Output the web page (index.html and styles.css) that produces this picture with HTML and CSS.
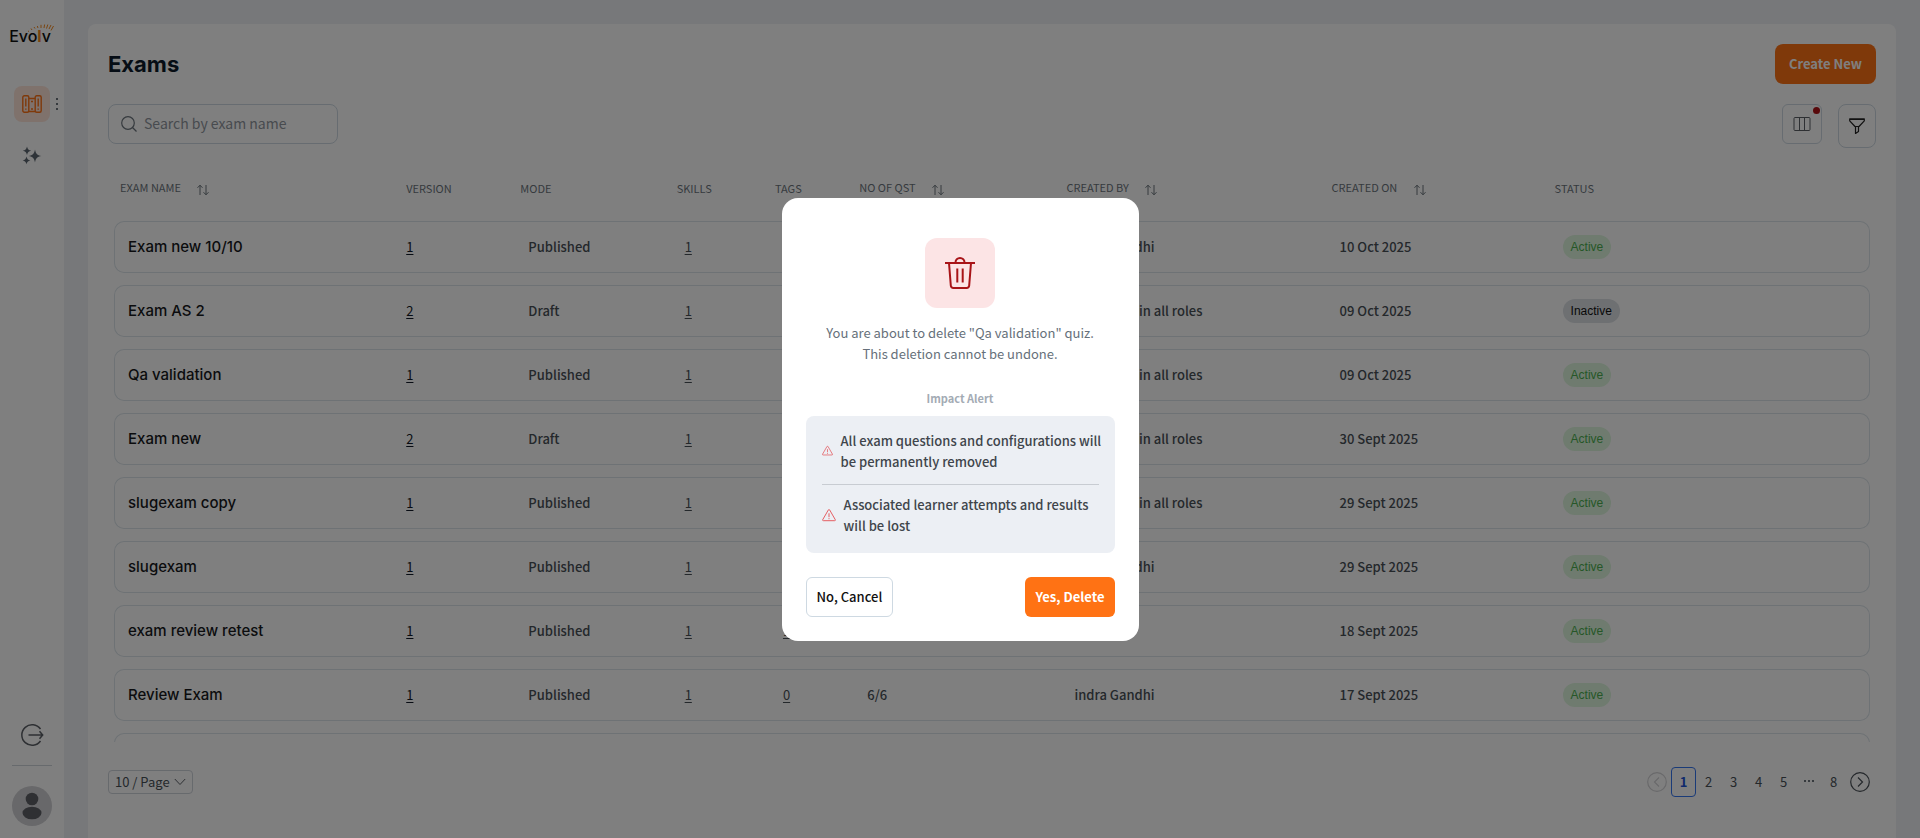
FILE: index.html
```html
<!DOCTYPE html>
<html lang="en">
<head>
  <meta charset="UTF-8" />
  <meta name="viewport" content="width=device-width, initial-scale=1.0"/>
  <title>Exams</title>
  <link rel="stylesheet" href="styles.css">
</head>
<body>
  <svg class="sprite" aria-hidden="true">
    <symbol id="sort" viewBox="0 0 12 12">
      <path d="M3 11V1.2M.5 3.8 3 1.2l2.500 2.600M9 1v9.800M6.500 8.200 9 10.800l2.500-2.600" fill="none" stroke="currentColor" stroke-linejoin="round"/>
    </symbol>
    <symbol id="warning" viewBox="0 0 16 16">
      <path d="M7.200 2.300.9 13.200a.9.9 0 0 0 .8 1.300h12.600a.9.9 0 0 0 .8-1.300L8.800 2.300a.9.9 0 0 0-1.600 0ZM8 6v4.500M8 11.600v1.200" fill="none" stroke="currentColor"/>
    </symbol>
  </svg>

  <aside class="sidebar">
    <a class="logo" href="#" aria-label="Evolv">
      Evo<span>l</span>v
      <svg class="rays" viewBox="0 0 26 8" width="26" height="8" aria-hidden="true">
        <path d="M1 7.500 0 7M4 6 3 4.500M7 4.500 6 3M10 4 9.300 2M13 4V.8M16 4l.6-3.500M18.500 4.500l1.300-4M21 5l2-4M23 6.500l2.500-4.500"/>
      </svg>
    </a>
    <nav class="menu">
      <a class="menu-item active" href="#" aria-label="Exams">
        <svg viewBox="0 0 20 18" width="20" height="18" fill="none" stroke="currentColor" stroke-width="1.400">
          <rect x=".8" y=".8" width="6" height="16.400" rx="1.500"/>
          <rect x="13.200" y=".8" width="6" height="16.400" rx="1.500"/>
          <path d="M6.800 3.500h6.400M6.800 16.500h6.400M3.800 3.500v8M3.800 13.500v1.200M16.200 3.500v8M16.200 13.500v1.200M9 6.500h2M9 14h2"/>
        </svg>
      </a>
      <button class="dots" aria-label="More"><i></i><i></i><i></i></button>
      <a class="menu-item" href="#" aria-label="AI tools">
        <svg viewBox="0 0 20 20" width="20" height="20" fill="currentColor">
          <path d="M13 3.500c.9 4.500 2 5.600 6.500 6.500-4.500.9-5.600 2-6.500 6.500-.9-4.500-2-5.600-6.500-6.500 4.500-.9 5.600-2 6.500-6.500ZM5 .5c.7 2.800 1.500 3.700 4.300 4.300C6.500 5.500 5.700 6.300 5 9.100 4.300 6.300 3.500 5.500.7 4.800 3.500 4.200 4.300 3.300 5 .5ZM4.500 10.500c.6 2.500 1.400 3.300 3.900 3.900-2.500.6-3.300 1.400-3.900 3.900-.6-2.500-1.400-3.300-3.900-3.900 2.500-.6 3.300-1.400 3.900-3.900Z"/>
        </svg>
      </a>
    </nav>
    <div class="sidebar-bottom">
      <button class="logout" aria-label="Log out">
        <svg viewBox="0 0 24 24" width="24" height="24" fill="none" stroke="currentColor" stroke-width="1.500">
          <path d="M20.500 6a10.300 10.300 0 1 0 0 12M8.500 12h14M19.500 8.200l3.200 3.800-3.200 3.800"/>
        </svg>
      </button>
      <button class="avatar" aria-label="Profile">
        <svg viewBox="0 0 40 40" width="40" height="40" fill="currentColor">
          <circle cx="20" cy="13" r="6.300"/>
          <ellipse cx="20" cy="27" rx="9.500" ry="6.300"/>
        </svg>
      </button>
    </div>
  </aside>

  <main class="content">
    <div class="page-header">
      <h1>Exams</h1>
      <button class="btn btn-primary create">Create New</button>
    </div>

    <div class="toolbar">
      <label class="search">
        <svg viewBox="0 0 16 16" width="16" height="16" fill="none" stroke="currentColor" stroke-width="1.200">
          <circle cx="7" cy="7" r="6.300"/>
          <path d="m11.500 11.500 4 4"/>
        </svg>
        <input type="text" placeholder="Search by exam name" aria-label="Search by exam name">
      </label>
      <div class="tools">
        <button class="tool columns" aria-label="Columns">
          <svg viewBox="0 0 18 16" width="18" height="16" fill="none" stroke="currentColor">
            <rect x="1" y="1.500" width="16" height="13" rx="1"/>
            <path d="M6.500 1.500v13M11.500 1.500v13"/>
          </svg>
          <span class="badge"></span>
        </button>
        <button class="tool filter" aria-label="Filter">
          <svg viewBox="0 0 16 16" width="16" height="16" fill="none" stroke="currentColor" stroke-width="1.200" stroke-linejoin="round">
            <path d="M.7.800h14.600v2L10 8.500H6L.7 2.800ZM.7 1.500h14.600M6.500 8.500v7l3-2v-5"/>
          </svg>
        </button>
      </div>
    </div>

    <div class="table-wrap">
      <table class="exams">
        <colgroup>
          <col class="col-name"><col class="col-version"><col class="col-mode"><col class="col-skills"><col class="col-tags">
          <col class="col-qst"><col class="col-by"><col class="col-on"><col class="col-status">
        </colgroup>
        <thead>
          <tr>
            <th>EXAM NAME <svg class="sort"><use href="#sort"/></svg></th>
            <th>VERSION</th>
            <th>MODE</th>
            <th>SKILLS</th>
            <th>TAGS</th>
            <th>NO OF QST <svg class="sort"><use href="#sort"/></svg></th>
            <th>CREATED BY <svg class="sort"><use href="#sort"/></svg></th>
            <th>CREATED ON <svg class="sort"><use href="#sort"/></svg></th>
            <th>STATUS</th>
          </tr>
        </thead>
        <tbody>
          <tr>
            <td class="name">Exam new 10/10</td>
            <td class="version"><a href="#">1</a></td>
            <td>Published</td>
            <td><a href="#">1</a></td>
            <td><a href="#">0</a></td>
            <td>6/6</td>
            <td>indra Gandhi</td>
            <td>10 Oct 2025</td>
            <td><span class="status active">Active</span></td>
          </tr>
          <tr>
            <td class="name">Exam AS 2</td>
            <td class="version"><a href="#">2</a></td>
            <td>Draft</td>
            <td><a href="#">1</a></td>
            <td><a href="#">0</a></td>
            <td>6/6</td>
            <td>Local Admin all roles</td>
            <td>09 Oct 2025</td>
            <td><span class="status inactive">Inactive</span></td>
          </tr>
          <tr>
            <td class="name">Qa validation</td>
            <td class="version"><a href="#">1</a></td>
            <td>Published</td>
            <td><a href="#">1</a></td>
            <td><a href="#">0</a></td>
            <td>6/6</td>
            <td>Local Admin all roles</td>
            <td>09 Oct 2025</td>
            <td><span class="status active">Active</span></td>
          </tr>
          <tr>
            <td class="name">Exam new</td>
            <td class="version"><a href="#">2</a></td>
            <td>Draft</td>
            <td><a href="#">1</a></td>
            <td><a href="#">0</a></td>
            <td>6/6</td>
            <td>Local Admin all roles</td>
            <td>30 Sept 2025</td>
            <td><span class="status active">Active</span></td>
          </tr>
          <tr>
            <td class="name">slugexam copy</td>
            <td class="version"><a href="#">1</a></td>
            <td>Published</td>
            <td><a href="#">1</a></td>
            <td><a href="#">0</a></td>
            <td>6/6</td>
            <td>Local Admin all roles</td>
            <td>29 Sept 2025</td>
            <td><span class="status active">Active</span></td>
          </tr>
          <tr>
            <td class="name">slugexam</td>
            <td class="version"><a href="#">1</a></td>
            <td>Published</td>
            <td><a href="#">1</a></td>
            <td><a href="#">0</a></td>
            <td>6/6</td>
            <td>indra Gandhi</td>
            <td>29 Sept 2025</td>
            <td><span class="status active">Active</span></td>
          </tr>
          <tr>
            <td class="name">exam review retest</td>
            <td class="version"><a href="#">1</a></td>
            <td>Published</td>
            <td><a href="#">1</a></td>
            <td><a href="#">1</a></td>
            <td>6/6</td>
            <td>Test</td>
            <td>18 Sept 2025</td>
            <td><span class="status active">Active</span></td>
          </tr>
          <tr>
            <td class="name">Review Exam</td>
            <td class="version"><a href="#">1</a></td>
            <td>Published</td>
            <td><a href="#">1</a></td>
            <td><a href="#">0</a></td>
            <td>6/6</td>
            <td>indra Gandhi</td>
            <td>17 Sept 2025</td>
            <td><span class="status active">Active</span></td>
          </tr>
          <tr>
            <td class="name"></td>
            <td></td>
            <td></td>
            <td></td>
            <td></td>
            <td></td>
            <td></td>
            <td></td>
            <td></td>
          </tr>
        </tbody>
      </table>
    </div>

    <div class="table-footer">
      <div class="page-size">
        <select aria-label="Rows per page">
          <option>10 / Page</option>
          <option>20 / Page</option>
          <option>50 / Page</option>
        </select>
        <svg viewBox="0 0 12 8" width="12" height="8" fill="none" stroke="currentColor"><path d="m.8 1 5.200 5.500L11.200 1"/></svg>
      </div>
      <nav class="pagination" aria-label="Pagination">
        <button class="arrow" disabled aria-label="Previous page">
          <svg viewBox="0 0 20 20" width="20" height="20" fill="none" stroke="currentColor" stroke-width="1.200"><circle cx="10" cy="10" r="9.300"/><path d="m12 5.500-4.500 4.500 4.500 4.500"/></svg>
        </button>
        <button class="page current">1</button>
        <button class="page">2</button>
        <button class="page">3</button>
        <button class="page">4</button>
        <button class="page">5</button>
        <span class="ellipsis"><i></i><i></i><i></i></span>
        <button class="page">8</button>
        <button class="arrow" aria-label="Next page">
          <svg viewBox="0 0 20 20" width="20" height="20" fill="none" stroke="currentColor" stroke-width="1.200"><circle cx="10" cy="10" r="9.300"/><path d="m8 5.500 4.500 4.500L8 14.500"/></svg>
        </button>
      </nav>
    </div>
  </main>

  <div class="overlay">
    <div class="modal" role="dialog" aria-modal="true" aria-describedby="message">
      <div class="modal-icon">
        <svg viewBox="0 0 30 32" width="30" height="32" fill="none" stroke="currentColor" stroke-width="2">
          <path d="M0 6h30"/>
          <path d="M10.500 5.500a4.500 4.500 0 0 1 9 0"/>
          <path d="m4 6 1.800 22.500A2.500 2.500 0 0 0 8.300 31h13.400a2.500 2.500 0 0 0 2.500-2.500L26 6M12.300 11.500v14M17.700 11.500v14"/>
        </svg>
      </div>
      <p class="message" id="message">You are about to delete "Qa validation" quiz.<br>This deletion cannot be undone.</p>
      <h2>Impact Alert</h2>
      <ul class="impacts">
        <li><svg class="warn-small"><use href="#warning"/></svg><span>All exam questions and configurations will<br>be permanently removed</span></li>
        <li><svg class="warn"><use href="#warning"/></svg><span>Associated learner attempts and results<br>will be lost</span></li>
      </ul>
      <div class="modal-actions">
        <button class="btn btn-outline">No, Cancel</button>
        <button class="btn btn-primary">Yes, Delete</button>
      </div>
    </div>
  </div>
</body>
</html>
```

FILE: styles.css
```css
* {
  box-sizing: border-box;
}

body {
  margin: 0;
  display: flex;
  height: 100vh;
  overflow: hidden;
  background: #eef0f4;
  color: #495057;
  font-family: 'Noto Sans CJK SC', sans-serif;
  font-size: 13px;
}

button,
input,
select {
  font: inherit;
  color: inherit;
}

button {
  padding: 0;
  border: none;
  background: none;
  cursor: pointer;
}

a {
  color: inherit;
}

svg {
  display: block;
  flex: none;
}

.sprite {
  display: none;
}

/* Sidebar */
.sidebar {
  width: 64px;
  flex: none;
  background: #fff;
  display: flex;
  flex-direction: column;
  align-items: center;
  padding: 24px 0 12px;
}

.logo {
  position: relative;
  margin-right: 4px;
  font-family: Inter, sans-serif;
  font-size: 16px;
  font-weight: 500;
  line-height: 24px;
  color: #111;
  text-decoration: none;
}

.logo span {
  color: #f58a1f;
  font-weight: 700;
}

.rays {
  position: absolute;
  right: -3px;
  top: 0;
  fill: none;
  stroke: #f58a1f;
}

.menu {
  position: relative;
  display: flex;
  flex-direction: column;
  gap: 16px;
  margin-top: 38px;
}

.menu-item {
  width: 36px;
  height: 36px;
  border-radius: 8px;
  display: flex;
  align-items: center;
  justify-content: center;
  color: #5c6670;
}

.menu-item.active {
  background: #ffe4d9;
  color: #ff7214;
}

.dots {
  position: absolute;
  left: 42px;
  top: 12px;
  display: flex;
  flex-direction: column;
  gap: 3px;
}

.dots i,
.ellipsis i {
  width: 2px;
  height: 2px;
  background: #6c757d;
}

.sidebar-bottom {
  margin-top: auto;
  display: flex;
  flex-direction: column;
  align-items: center;
}

.logout {
  width: 40px;
  padding: 0 8px 18px;
  border-bottom: 1px solid #ced4da;
  color: #5c6067;
}

.avatar {
  margin-top: 20px;
  border-radius: 50%;
  background: #d0d0d4;
  color: #5f6167;
}

/* Page */
.content {
  flex: 1;
  min-width: 0;
  margin: 24px 24px 0;
  padding: 20px 20px 41px;
  background: #fff;
  border-radius: 8px 8px 0 0;
  display: flex;
  flex-direction: column;
}

.page-header,
.toolbar,
.table-footer {
  display: flex;
  justify-content: space-between;
}

.page-header {
  align-items: center;
  margin-bottom: 20px;
}

h1 {
  margin: 0;
  font-family: Inter, sans-serif;
  font-size: 22px;
  font-weight: 700;
  color: #0d1b2a;
}

.btn {
  height: 40px;
  padding: 0 10px;
  border-radius: 6px;
  font-weight: 700;
}

.btn-primary {
  background: #ff7214;
  color: #fff;
}

.btn-outline {
  border: 1px solid #ced9e2;
  background: #fff;
  color: #111;
  font-weight: 500;
}

.create {
  padding: 0 14px 2px;
  border-radius: 8px;
}

.toolbar {
  align-items: flex-start;
  margin-bottom: 8px;
}

.search {
  width: 230px;
  height: 40px;
  padding: 0 12px;
  border: 1px solid #ced9e2;
  border-radius: 8px;
  display: flex;
  align-items: center;
  gap: 7px;
  color: #6c757d;
}

.search input {
  min-width: 0;
  flex: 1;
  padding: 0 0 2px;
  border: none;
  outline: none;
  background: none;
  font-size: 14px;
}

.search input::placeholder {
  color: #90969e;
}

.tools {
  display: flex;
  align-items: flex-start;
  gap: 16px;
}

.tool {
  position: relative;
  display: flex;
  align-items: center;
  justify-content: center;
  border: 1px solid #ced9e2;
}

.columns {
  width: 40px;
  height: 40px;
  border-radius: 6px;
  color: #5c6067;
}

.filter {
  width: 38px;
  height: 44px;
  border-radius: 8px;
  color: #222;
}

.badge {
  position: absolute;
  top: 2px;
  right: 1px;
  width: 7px;
  height: 7px;
  border-radius: 50%;
  background: #b01217;
}

/* Table */
.table-wrap {
  flex: 1;
  min-height: 0;
  overflow: hidden;
  padding: 0 6px;
}

.exams {
  width: 100%;
  table-layout: fixed;
  border-collapse: separate;
  border-spacing: 0 12px;
}

.col-name { width: 16.3%; }
.col-version { width: 6.5%; }
.col-mode { width: 8.9%; }
.col-skills { width: 5.6%; }
.col-tags { width: 4.8%; }
.col-qst { width: 11.8%; }
.col-by { width: 15.1%; }
.col-on { width: 12.7%; }

.exams th {
  height: 41px;
  padding: 0 6px 2px;
  text-align: left;
  font-size: 11px;
  font-weight: 400;
  color: #6c757d;
  white-space: nowrap;
}

.sort {
  display: inline-block;
  width: 12px;
  height: 12px;
  margin-left: 14px;
  vertical-align: middle;
}

.exams td {
  height: 52px;
  padding: 0 14px 2px;
  border: solid #dce4ea;
  border-width: 1px 0;
  font-weight: 500;
  white-space: nowrap;
}

.exams td:first-child {
  padding-left: 13px;
  border-left-width: 1px;
  border-radius: 10px 0 0 10px;
}

.exams td:last-child {
  padding-bottom: 0;
  border-right-width: 1px;
  border-radius: 0 10px 10px 0;
}

.exams .name {
  font-family: Inter, sans-serif;
  font-size: 15px;
  color: #17191c;
}

.exams td a {
  font-weight: 400;
  text-underline-offset: 2px;
}

.exams .version {
  padding-left: 6px;
  color: #111827;
}

.status {
  display: inline-block;
  padding: 0 8px;
  border-radius: 12px;
  font-family: 'Liberation Sans', sans-serif;
  font-size: 12px;
  font-weight: 400;
  line-height: 24px;
}

.status.active {
  background: #def7de;
  color: #4caf50;
}

.status.inactive {
  background: #dce0e5;
  color: #111;
}

/* Footer */
.table-footer {
  align-items: center;
  margin-top: 25px;
}

.page-size {
  position: relative;
  color: #5c6067;
}

.page-size select {
  display: block;
  width: 85px;
  height: 24px;
  padding: 0 6px 2px;
  border: 1px solid #ced4da;
  border-radius: 4px;
  background: none;
  appearance: none;
  color: #495057;
}

.page-size svg {
  position: absolute;
  right: 7px;
  top: 8px;
  pointer-events: none;
}

.pagination {
  display: flex;
  align-items: center;
  margin-right: 6px;
}

.page,
.ellipsis {
  width: 25px;
  height: 30px;
  padding-bottom: 2px;
  border-radius: 4px;
}

.page.current {
  border: 1px solid #3576f0;
  color: #1f55d8;
  font-weight: 700;
}

.ellipsis {
  display: flex;
  align-items: center;
  justify-content: center;
  gap: 2px;
}

.arrow:first-child {
  margin-right: 4px;
}

.arrow:last-child {
  margin-left: 4px;
}

.arrow:disabled {
  color: #d3d3d6;
  cursor: default;
}

/* Delete dialog */
.overlay {
  position: fixed;
  inset: 0;
  display: flex;
  align-items: center;
  justify-content: center;
  background: rgba(0, 0, 0, 0.5);
}

.modal {
  width: 357px;
  max-width: 100%;
  padding: 40px 24px 24px;
  background: #fff;
  border-radius: 16px;
  line-height: 21px;
}

.modal-icon {
  width: 70px;
  height: 70px;
  margin: 0 auto;
  border-radius: 12px;
  background: #fce4e5;
  color: #a81418;
  display: flex;
  align-items: center;
  justify-content: center;
}

.message {
  margin: 14px 0 25px;
  text-align: center;
  color: #66707a;
}

h2 {
  margin: 0 0 8px;
  text-align: center;
  font-size: 11px;
  font-weight: 700;
  line-height: 19px;
  color: #a3abb4;
}

.impacts {
  margin: 0;
  padding: 14px 16px 17px;
  list-style: none;
  border-radius: 8px;
  background: #eceff4;
  font-weight: 500;
  color: #40454b;
  white-space: nowrap;
}

.impacts li {
  display: flex;
  align-items: center;
  gap: 8px;
}

.impacts li + li {
  margin-top: 12px;
  padding-top: 9px;
  border-top: 1px solid #c8ccd2;
}

.warn,
.warn-small {
  width: 14px;
  height: 14px;
  color: #e4484d;
}

.warn-small {
  width: 11px;
  height: 11px;
}

.modal-actions {
  display: flex;
  justify-content: space-between;
  margin-top: 24px;
}
```
